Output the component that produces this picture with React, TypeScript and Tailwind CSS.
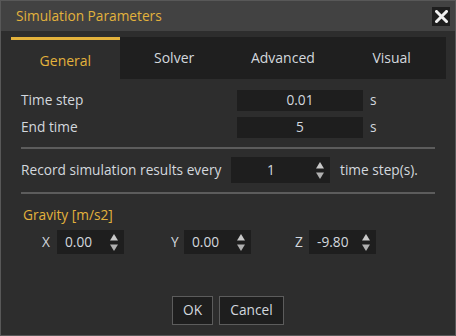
import React from "react";

const font = { fontFamily: '"Open Sans", "Noto Sans", sans-serif' };

function Spin() {
  return (
    <svg width="8" height="21" viewBox="0 0 8 21" className="shrink-0">
      <path d="M4 2 L8 8.5 L0 8.5 Z" fill="#c8c8c8" />
      <path d="M0 12.5 L8 12.5 L4 19 Z" fill="#b0b0b0" />
    </svg>
  );
}

export default function App() {
  const tabs = ["General", "Solver", "Advanced", "Visual"];
  const grav = [
    { l: "X", v: "0.00", cls: "", lw: "w-[15px]" },
    { l: "Y", v: "0.00", cls: "ml-[47px]", lw: "w-[13px]" },
    { l: "Z", v: "-9.80", cls: "ml-[44px]", lw: "w-[14px]" },
  ];
  return (
    <div
      className="w-[456px] h-[336px] border border-[#585858] bg-[#2d2d2d] flex flex-col text-[13.7px] text-[#d3d8de] overflow-hidden"
      style={font}
    >
      {/* Title bar */}
      <div className="h-[30px] shrink-0 bg-[#424242] flex items-center justify-between pl-[15px] pr-[5px]">
        <span className="text-[13.7px] text-[#e3b23c]">Simulation Parameters</span>
        <div className="w-[18px] h-[19px] bg-[#1e1e1e] flex items-center justify-center">
          <svg width="13" height="13" viewBox="0 0 13 13">
            <path d="M1.5 1.5 L11.5 11.5 M11.5 1.5 L1.5 11.5" stroke="#f0f0f0" strokeWidth="3" strokeLinecap="square" />
          </svg>
        </div>
      </div>

      {/* Tabs */}
      <div className="mt-[6px] ml-[10px] mr-[9px] h-[42px] grid grid-cols-4 bg-[#1f1f1f] shrink-0">
        {tabs.map((t, i) =>
          i === 0 ? (
            <div key={t} className="bg-[#2d2d2d] border-t-[3px] border-[#e3b23c] flex items-center justify-center pt-[1px] text-[#e3b23c] text-[14px]">
              {t}
            </div>
          ) : (
            <div key={t} className="flex items-center justify-center pb-[2px] text-[14px] text-[#d3d8de]">
              {t}
            </div>
          )
        )}
      </div>

      {/* Content */}
      <div className="pl-[20px] flex flex-col flex-1">
        <div className="mt-[11px] flex items-center h-[21px]">
          <span className="w-[216px]">Time step</span>
          <div className="w-[126px] h-[21px] bg-[#1e1e1e] flex items-center justify-center">0.01</div>
          <span className="ml-[7px]">s</span>
        </div>
        <div className="mt-[6px] flex items-center h-[21px]">
          <span className="w-[216px]">End time</span>
          <div className="w-[126px] h-[21px] bg-[#1e1e1e] flex items-center justify-center">5</div>
          <span className="ml-[7px]">s</span>
        </div>

        <div className="mt-[9px] w-[414px] h-[2px] bg-[#5c5c5c]" />

        <div className="mt-[8px] flex items-center h-[26px]">
          <span className="w-[210px] whitespace-nowrap">Record simulation results every</span>
          <div className="w-[99px] h-[26px] bg-[#1e1e1e] flex items-center pl-[36px] pr-[6px]">
            <span className="flex-1">1</span>
            <Spin />
          </div>
          <span className="ml-[10px]">time step(s).</span>
        </div>

        <div className="mt-[9px] w-[414px] h-[2px] bg-[#5c5c5c]" />

        <div className="mt-[12px] ml-[2px] text-[#e3b23c] leading-[18px]">Gravity [m/s2]</div>

        <div className="mt-[6px] flex items-center h-[24px] pl-[21px]">
          {grav.map((g) => (
            <div key={g.l} className={`flex items-center ${g.cls}`}>
              <span className={g.lw}>{g.l}</span>
              <div className="w-[67px] h-[24px] bg-[#1e1e1e] flex items-center pl-[8px] pr-[6px]">
                <span className="flex-1">{g.v}</span>
                <Spin />
              </div>
            </div>
          ))}
        </div>

        <div className="mt-auto mb-[10px] flex justify-center gap-[6px] pr-[20px]">
          <div className="w-[41px] h-[29px] border border-[#5c5c5c] bg-[#1e1e1e] flex items-center justify-center">OK</div>
          <div className="w-[65px] h-[29px] border border-[#5c5c5c] bg-[#1e1e1e] flex items-center justify-center">Cancel</div>
        </div>
      </div>
    </div>
  );
}
